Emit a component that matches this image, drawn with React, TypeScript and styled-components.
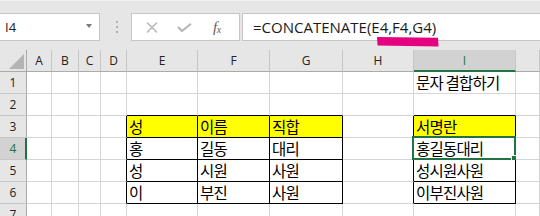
import React from "react";
import styled, { createGlobalStyle } from "styled-components";

const GlobalStyle = createGlobalStyle`
  html, body { margin: 0; padding: 0; background: #ffffff; overflow: hidden; }
  * { box-sizing: border-box; }
`;

const GREEN = "#217346";
const GRID = "#d6d6d6";
const HDR_LINE = "#c6c6c6";
const HDR_EDGE = "#ababab";

const Window = styled.div`
  position: relative;
  width: 540px;
  height: 216px;
  overflow: hidden;
  background: #e6e6e6;
  font-family: "Open Sans", "Noto Sans", sans-serif;
`;

const FormulaBar = styled.div`
  display: flex;
  align-items: flex-start;
  height: 50px;
  padding-top: 12px;
  border-top: 1px solid #f0f0f0;
`;

const Box = styled.div`
  height: 28px;
  background: #ffffff;
  border: 1px solid ${HDR_LINE};
  display: flex;
  align-items: center;
`;

const NameBox = styled(Box)`
  width: 100px;
  border-left: none;
  padding-left: 5px;
  font-size: 13px;
  color: #222;
  justify-content: space-between;
  padding-right: 7px;
`;

const Caret = styled.span`
  width: 0;
  height: 0;
  border-left: 3.5px solid transparent;
  border-right: 3.5px solid transparent;
  border-top: 4px solid #7a7a7a;
  margin-top: -2px;
`;

const Grip = styled.div`
  width: 31px;
  height: 28px;
  display: flex;
  flex-direction: column;
  align-items: center;
  justify-content: center;
  gap: 3px;
  padding-left: 2px;
`;

const Dot = styled.span`
  width: 2px;
  height: 2px;
  background: #b0b0b0;
`;

const ButtonsBox = styled(Box)`
  width: 109px;
  justify-content: space-around;
  padding: 0 6px 0 4px;
  margin-right: 2px;
`;

const IconSlot = styled.span`
  width: 22px;
  display: flex;
  justify-content: center;
  align-items: center;
`;

const Fx = styled.span`
  font-family: "Liberation Serif", "DejaVu Serif", serif;
  font-style: italic;
  font-size: 15px;
  color: #606060;
  letter-spacing: -0.5px;
  sub {
    font-size: 10px;
    vertical-align: -1px;
  }
`;

const FormulaInput = styled(Box)`
  flex: 1;
  margin-right: -4px;
  padding-left: 10px;
  font-size: 15px;
  color: #1a1a1a;
  white-space: nowrap;
`;

const Marker = styled.svg`
  position: absolute;
  left: 376px;
  top: 36px;
`;

const Sheet = styled.div`
  display: grid;
  grid-template-columns: 27px 25px 27px 22px 26px 71px 72px 73px 71px 102px 1fr;
  grid-auto-rows: 22px;
  background: #ffffff;
`;

const Corner = styled.div`
  background: #e6e6e6;
  border-right: 1px solid ${HDR_EDGE};
  border-bottom: 1px solid ${HDR_EDGE};
  position: relative;
  display: flex;
  align-items: flex-end;
  justify-content: flex-end;
  padding: 0 2px 2px 0;
`;

const Triangle = styled.span`
  width: 0;
  height: 0;
  border-left: 15px solid transparent;
  border-bottom: 15px solid #b4b4b4;
`;

const ColHeader = styled.div<{ $sel?: boolean }>`
  background: ${(p) => (p.$sel ? "#d2d2d2" : "#e6e6e6")};
  border-right: 1px solid ${HDR_LINE};
  border-bottom: ${(p) => (p.$sel ? `2px solid ${GREEN}` : `1px solid ${HDR_EDGE}`)};
  color: ${(p) => (p.$sel ? GREEN : "#222")};
  font-size: 12px;
  display: flex;
  align-items: center;
  justify-content: center;
  padding-top: ${(p) => (p.$sel ? "1px" : "0")};
`;

const RowHeader = styled.div<{ $sel?: boolean }>`
  background: ${(p) => (p.$sel ? "#d2d2d2" : "#e6e6e6")};
  border-right: ${(p) => (p.$sel ? `2px solid ${GREEN}` : `1px solid ${HDR_EDGE}`)};
  border-bottom: 1px solid ${HDR_LINE};
  color: ${(p) => (p.$sel ? GREEN : "#222")};
  font-size: 12px;
  display: flex;
  align-items: center;
  justify-content: center;
  padding-left: ${(p) => (p.$sel ? "1px" : "0")};
`;

const Cell = styled.div<{ $right: string; $bottom: string; $fill?: string }>`
  position: relative;
  background: ${(p) => p.$fill || "#ffffff"};
  border-right: 1px solid ${(p) => p.$right};
  border-bottom: 1px solid ${(p) => p.$bottom};
  font-family: "Noto Sans CJK KR", "Noto Sans", sans-serif;
  font-size: 15.5px;
  letter-spacing: -0.8px;
  line-height: 21px;
  color: #000;
  padding-left: 2px;
  white-space: nowrap;
`;

const Selection = styled.div`
  position: absolute;
  left: -2px;
  top: -2px;
  right: -1px;
  bottom: -1px;
  border: 2px solid ${GREEN};
  pointer-events: none;
`;

const FillHandle = styled.span`
  position: absolute;
  right: -4px;
  bottom: -4px;
  width: 6px;
  height: 6px;
  background: ${GREEN};
  outline: 1px solid #ffffff;
`;

const COLS = ["A", "B", "C", "D", "E", "F", "G", "H", "I", "J"];
const ROWS = [1, 2, 3, 4, 5, 6, 7];

const DATA: Record<string, string> = {
  I1: "문자 결합하기",
  E3: "성",
  F3: "이름",
  G3: "직합",
  I3: "서명란",
  E4: "홍",
  F4: "길동",
  G4: "대리",
  I4: "홍길동대리",
  E5: "성",
  F5: "시원",
  G5: "사원",
  I5: "성시원사원",
  E6: "이",
  F6: "부진",
  G6: "사원",
  I6: "이부진사원",
};

const YELLOW = new Set(["E3", "F3", "G3", "I3"]);
const BOXED_COLS = [4, 5, 6, 8];

const boxed = (r: number, c: number) => r >= 3 && r <= 6 && BOXED_COLS.includes(c);

const SEL_COL = 8;
const SEL_ROW = 4;

export default function App() {
  return (
    <>
      <GlobalStyle />
      <Window>
        <FormulaBar>
          <NameBox>
            <span>I4</span>
            <Caret />
          </NameBox>
          <Grip>
            <Dot />
            <Dot />
            <Dot />
          </Grip>
          <ButtonsBox>
            <IconSlot>
              <svg width="12" height="11" viewBox="0 0 12 11">
                <path d="M1 0.5 L11 10.5 M11 0.5 L1 10.5" stroke="#b4b4b4" strokeWidth="1.3" fill="none" />
              </svg>
            </IconSlot>
            <IconSlot>
              <svg width="15" height="9" viewBox="0 0 15 9">
                <path d="M1 4 L5 8 L14 0.8" stroke="#b4b4b4" strokeWidth="2" fill="none" />
              </svg>
            </IconSlot>
            <IconSlot>
              <Fx>
                f<sub>x</sub>
              </Fx>
            </IconSlot>
          </ButtonsBox>
          <FormulaInput>=CONCATENATE(E4,F4,G4)</FormulaInput>
        </FormulaBar>
        <Marker width="64" height="12" viewBox="0 0 64 12">
          <path d="M1 1 L62 1.8 L62.5 10.5 L1.5 9.5 Z" fill="#e5007f" />
        </Marker>
        <Sheet>
          <Corner>
            <Triangle />
          </Corner>
          {COLS.map((c, i) => (
            <ColHeader key={c} $sel={i === SEL_COL}>
              {c === "J" ? "" : c}
            </ColHeader>
          ))}
          {ROWS.map((r) => (
            <React.Fragment key={r}>
              <RowHeader $sel={r === SEL_ROW}>{r}</RowHeader>
              {COLS.map((c, ci) => {
                const id = `${c}${r}`;
                const right = boxed(r, ci) || boxed(r, ci + 1) ? "#000" : GRID;
                const bottom = boxed(r, ci) || boxed(r + 1, ci) ? "#000" : GRID;
                return (
                  <Cell key={id} $right={right} $bottom={bottom} $fill={YELLOW.has(id) ? "#ffff00" : undefined}>
                    {DATA[id]}
                    {r === SEL_ROW && ci === SEL_COL && (
                      <Selection>
                        <FillHandle />
                      </Selection>
                    )}
                  </Cell>
                );
              })}
            </React.Fragment>
          ))}
        </Sheet>
      </Window>
    </>
  );
}
